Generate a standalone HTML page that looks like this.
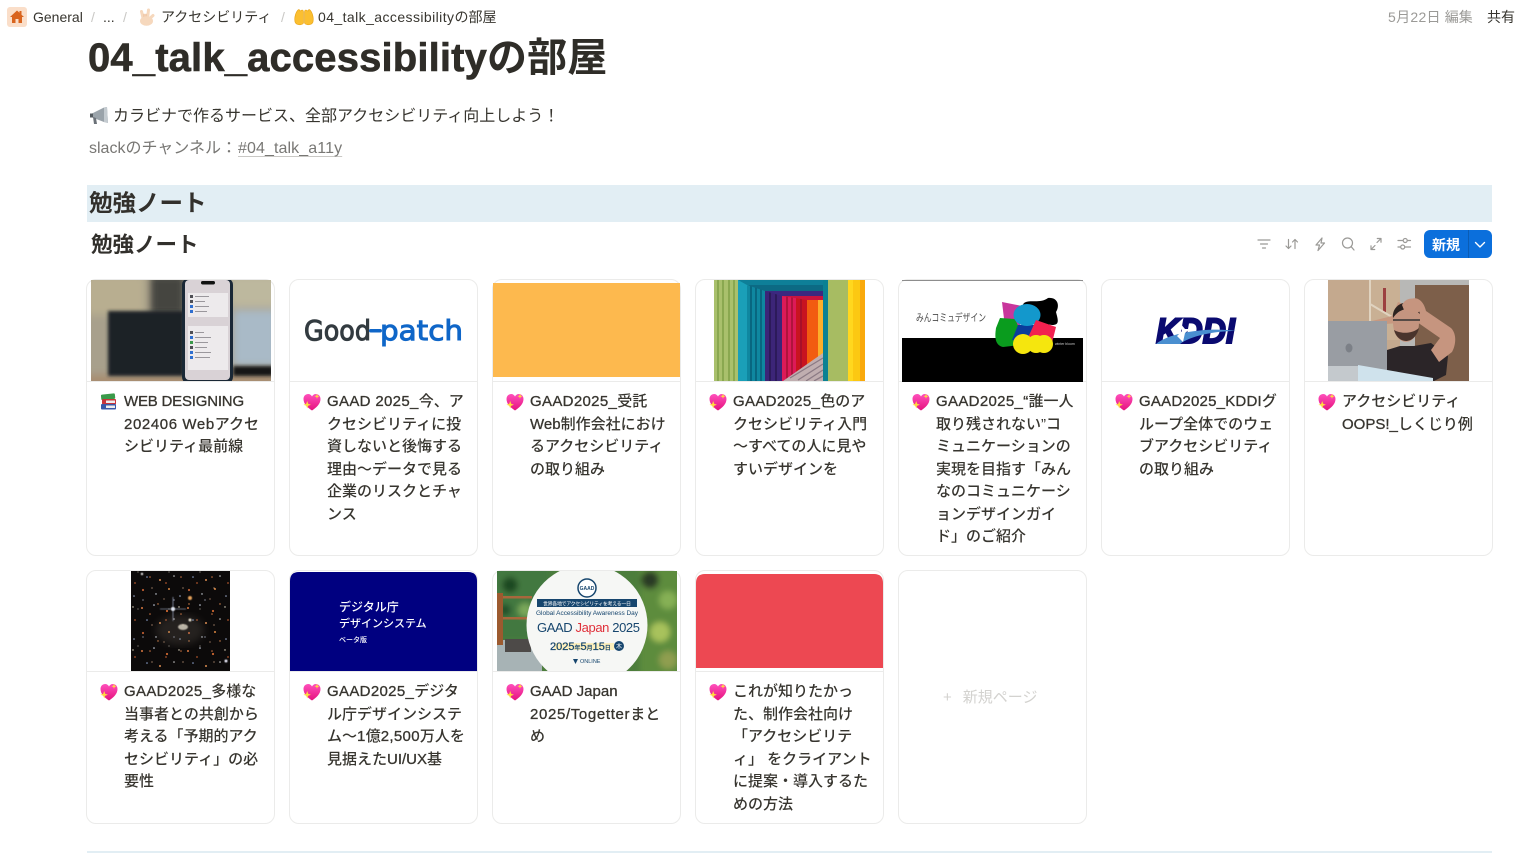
<!DOCTYPE html>
<html lang="ja"><head><meta charset="utf-8"><title>04_talk_accessibilityの部屋</title>
<style>
html,body{margin:0;padding:0;background:#fff}
body{position:relative;width:1519px;height:853px;overflow:hidden;font-family:"Liberation Sans","Noto Sans CJK JP",sans-serif;color:#37352f}
.t{position:absolute;white-space:nowrap}
.card{position:absolute;width:187px;border:1px solid #ebebea;border-radius:10px;box-sizing:content-box}
.r1{top:279px;height:275px}.r2{top:570px;height:252px}
.c{position:absolute;white-space:nowrap;font-size:15px;line-height:22.5px;font-weight:500;color:#37352f}
.l{-webkit-text-stroke:.3px #37352f;letter-spacing:.33px}
.bc{font-size:14px;line-height:20px;top:7px;color:#37352f}
.sep{color:#c9c8c5}
svg.g{position:absolute;left:0;top:0}
</style></head><body>

<div class="card r1" style="left:86px"></div>
<div class="card r1" style="left:289px"></div>
<div class="card r1" style="left:492px"></div>
<div class="card r1" style="left:695px"></div>
<div class="card r1" style="left:898px"></div>
<div class="card r1" style="left:1101px"></div>
<div class="card r1" style="left:1304px"></div>
<div class="card r2" style="left:86px"></div>
<div class="card r2" style="left:289px"></div>
<div class="card r2" style="left:492px"></div>
<div class="card r2" style="left:695px"></div>
<div class="card r2" style="left:898px"></div>

<svg class="g" width="1519" height="853" viewBox="0 0 1519 853" font-family="'Liberation Sans','Noto Sans CJK JP',sans-serif">
<defs>
<filter id="b1"><feGaussianBlur stdDeviation="1.5"/></filter>
<filter id="b3"><feGaussianBlur stdDeviation="3"/></filter>
<filter id="b4"><feGaussianBlur stdDeviation="4"/></filter>
<filter id="b05"><feGaussianBlur stdDeviation=".5"/></filter>
<linearGradient id="hg" x1="0" y1="0" x2="0" y2="1"><stop offset="0" stop-color="#ff4fbc"/><stop offset="1" stop-color="#e5127c"/></linearGradient>
<symbol id="heart" viewBox="0 0 18 18"><path d="M9 17.500C4.500 14.500 .5 11 .5 6 .5 2.800 2.800 1 5.200 1 6.900 1 8.300 2 9 3.500 9.700 2 11.100 1 12.800 1 15.200 1 17.500 2.800 17.500 6 17.500 11 13.500 14.500 9 17.500Z" fill="url(#hg)"/><path d="M4.200 8l1 2.700 2.700 1-2.700 1-1 2.700-1-2.700-2.700-1 2.700-1zM14 .8l.7 1.800 1.800.7-1.800.7-.7 1.800-.7-1.800-1.800-.7 1.800-.7z" fill="#ffd93f"/></symbol>
<pattern id="stars" width="46" height="43" patternUnits="userSpaceOnUse">
<circle cx="4" cy="6" r="1" fill="#d9773f"/><circle cx="16" cy="3" r=".8" fill="#cfd8e8"/><circle cx="29" cy="9" r="1.100" fill="#c9652f"/><circle cx="41" cy="5" r=".7" fill="#e9e0c8"/><circle cx="9" cy="18" r=".8" fill="#8fa4d0"/><circle cx="22" cy="21" r="1" fill="#d98a4f"/><circle cx="36" cy="17" r=".8" fill="#c8c8c8"/><circle cx="5" cy="31" r="1.100" fill="#b85a30"/><circle cx="18" cy="35" r=".7" fill="#dfe6f0"/><circle cx="31" cy="30" r="1" fill="#d9853f"/><circle cx="42" cy="37" r=".8" fill="#9aa8c8"/><circle cx="26" cy="40" r=".6" fill="#d0a080"/>
</pattern>
<pattern id="stars2" width="31" height="37" patternUnits="userSpaceOnUse">
<circle cx="3" cy="12" r=".7" fill="#e08a50"/><circle cx="11" cy="28" r=".9" fill="#a85028"/><circle cx="19" cy="8" r=".6" fill="#c0c8e0"/><circle cx="26" cy="22" r=".8" fill="#c87040"/><circle cx="14" cy="17" r=".5" fill="#e8e0d0"/><circle cx="28" cy="33" r=".6" fill="#e0b090"/>
</pattern>
<clipPath id="cp1"><path d="M91 280H271V381H91Z"/></clipPath>
<clipPath id="cp7"><path d="M1328 280H1469V381H1328Z"/></clipPath>
<clipPath id="cp9"><path d="M497 571H677V671H497Z"/></clipPath>
<clipPath id="cp4"><path d="M714 280H865V381H714Z"/></clipPath>
</defs>

<!-- breadcrumb icons -->
<rect x="7" y="7" width="20" height="20" rx="3" fill="#fadec9"/>
<path d="M17 10.500L10 17H12V23H15.500V19H18.500V23H22V17H24L21.500 14.700V11H19.500V12.800Z" fill="#d9641e"/>
<g fill="none" stroke="#f6d8bd" stroke-linecap="round"><path d="M141.500 11.500L143.500 20M148.500 10L147.500 19" stroke-width="3"/><path d="M147 21L153 15.500" stroke-width="3"/></g>
<path d="M144 14.500v5M146 14.500v5" stroke="#f0c8a8" stroke-width="1.800" stroke-linecap="round"/>
<ellipse cx="146.500" cy="21" rx="6.500" ry="4.800" fill="#f6d8bd"/>
<g transform="translate(294 9)"><path d="M1 13C0 8 2 3 4 1 5 0 6 1 6 2L8 1C9 1 9.500 2 9.500 3L9.500 14C8 16.500 2.500 16.500 1 13Z" fill="#fbbf30" stroke="#e8a317" stroke-width=".6"/><path d="M19 13C20 8 18 3 16 1 15 0 14 1 14 2L12 1C11 1 10.500 2 10.500 3L10.500 14C12 16.500 17.500 16.500 19 13Z" fill="#fbbf30" stroke="#e8a317" stroke-width=".6"/></g>

<!-- megaphone -->
<g transform="translate(90 106)"><path d="M1 8L14 1.500 17 1 18 17 14 16 1 11Z" fill="#9aa3aa"/><path d="M14 1.500L17 1 18 17 14 16Z" fill="#c4cbd0"/><path d="M3 11L6 12 7 18 4 18Z" fill="#6b7178"/><rect x="0" y="7.500" width="3" height="4" fill="#555b60"/></g>

<!-- band -->
<rect x="87" y="185" width="1405" height="37" fill="#e2eef4"/>

<!-- toolbar icons -->
<g fill="none" stroke="#9b9a97" stroke-width="1.200" stroke-linecap="round" stroke-linejoin="round">
<path d="M1258 240H1270M1260.500 244H1267.500M1262.500 248H1265.500"/>
<path d="M1288.500 239.500V248.500M1286 246L1288.500 248.500 1291 246M1295 248.500V239.500M1292.500 242L1295 239.500 1297.500 242"/>
<path d="M1322 238L1316 245H1319.500L1318 250.500M1322 238L1321 243H1324.500L1318 250.500"/>
<circle cx="1347.500" cy="243" r="5"/><path d="M1351.200 246.700L1354 250"/>
<path d="M1371 249.500L1375 245.500M1371 245.800V249.500H1374.700M1381 238.500L1377 242.500M1377.300 238.500H1381V242.200"/>
<path d="M1398 240.500H1403M1407.500 240.500H1410.500M1398 247H1400.500M1405 247H1410.500"/>
<circle cx="1405.200" cy="240.500" r="2"/><circle cx="1402.700" cy="247" r="2"/>
</g>
<rect x="1424" y="230" width="68" height="28" rx="6" fill="#0b6fdc"/>
<rect x="1468" y="230" width="1" height="28" fill="#0a5cb5"/>
<path d="M1475.500 242.500L1480 247 1484.500 242.500" fill="none" stroke="#fff" stroke-width="1.400" stroke-linecap="round" stroke-linejoin="round"/>

<!-- card dividers -->
<g fill="#ebebea">
<rect x="87" y="381" width="187" height="1"/><rect x="290" y="381" width="187" height="1"/><rect x="493" y="381" width="187" height="1"/><rect x="696" y="381" width="187" height="1"/><rect x="899" y="381" width="187" height="1"/><rect x="1102" y="381" width="187" height="1"/><rect x="1305" y="381" width="187" height="1"/>
<rect x="87" y="671" width="187" height="1"/><rect x="290" y="671" width="187" height="1"/><rect x="493" y="671" width="187" height="1"/><rect x="696" y="671" width="187" height="1"/>
</g>

<!-- card 1 photo -->
<g clip-path="url(#cp1)">
<rect x="91" y="280" width="180" height="101" fill="#a8a08c"/>
<g filter="url(#b4)">
<rect x="85" y="275" width="60" height="40" fill="#b8ae90"/>
<rect x="150" y="275" width="35" height="40" fill="#45443f"/>
<rect x="230" y="275" width="50" height="32" fill="#bdb89e"/>
<rect x="233" y="310" width="45" height="56" fill="#a9bac7"/>
<rect x="85" y="375" width="190" height="12" fill="#a88c70"/>
</g>
<g filter="url(#b1)">
<rect x="108" y="311" width="76" height="65" fill="#1f2227"/>
<rect x="233" y="366" width="40" height="10" fill="#121316"/>
</g>
<rect x="182" y="278" width="51" height="106" rx="7" fill="#1a2836"/>
<rect x="185" y="280" width="45" height="100" rx="4" fill="#d9d2d6"/>
<rect x="201" y="281" width="14" height="3.500" rx="1.700" fill="#111"/>
<g fill="#fff" opacity=".55"><rect x="188" y="293" width="40" height="24"/><rect x="188" y="326" width="40" height="44"/></g>
<g fill="#4f4f55"><rect x="190" y="295" width="3" height="3"/><rect x="190" y="300" width="3" height="3"/><rect x="190" y="331" width="3" height="3"/><rect x="190" y="346" width="3" height="3"/></g>
<rect x="190" y="341" width="3" height="3" fill="#3c9a4c"/>
<g fill="#2f6fd0"><rect x="190" y="305" width="3" height="3"/><rect x="190" y="310" width="3" height="3"/><rect x="190" y="336" width="3" height="3"/><rect x="190" y="351" width="3" height="3"/><rect x="190" y="356" width="3" height="3"/></g>
<g fill="#9a979c"><rect x="195" y="296" width="14" height="1"/><rect x="195" y="301" width="10" height="1"/><rect x="195" y="306" width="14" height="1"/><rect x="195" y="311" width="12" height="1"/><rect x="195" y="332" width="9" height="1"/><rect x="195" y="337" width="16" height="1"/><rect x="195" y="342" width="13" height="1"/><rect x="195" y="347" width="12" height="1"/><rect x="195" y="352" width="16" height="1"/><rect x="195" y="357" width="15" height="1"/></g>
</g>

<!-- card 2 logo -->
<text x="304" y="340" font-family="'DejaVu Sans',sans-serif" font-size="28" fill="#333b40" stroke="#333b40" stroke-width="1" textLength="67" lengthAdjust="spacingAndGlyphs">Good</text>
<text x="380" y="340" font-family="'DejaVu Sans',sans-serif" font-size="28" fill="#0f66c8" stroke="#0f66c8" stroke-width="1" textLength="83" lengthAdjust="spacingAndGlyphs">patch</text>
<rect x="369" y="329" width="13" height="3.500" rx="1.700" fill="#0f66c8"/>

<!-- card 3 -->
<rect x="493" y="283" width="187" height="94" fill="#fdb94e"/>

<!-- card 4 rainbow -->
<g clip-path="url(#cp4)">
<rect x="714" y="280" width="151" height="101" fill="#1296a8"/>
<rect x="714" y="280" width="24" height="101" fill="#a9c06c"/>
<path d="M718 280V381M723 280V381M729 280V381M734 280V381" stroke="#8aa850" stroke-width="2"/>
<rect x="738" y="280" width="9" height="101" fill="#1a9fb8"/>
<rect x="747" y="286" width="18" height="95" fill="#0f87a0"/>
<path d="M751 286V381M756 286V381M761 286V381" stroke="#075f78" stroke-width="1.600"/>
<rect x="765" y="291" width="17" height="90" fill="#3c2578"/>
<path d="M770 291V381M776 291V381" stroke="#261650" stroke-width="1.500"/>
<rect x="782" y="296" width="14" height="85" fill="#dd1a58"/>
<rect x="796" y="296" width="11" height="85" fill="#c81420"/>
<path d="M787 296V381M792 296V381M801 296V381" stroke="#98102e" stroke-width="1.300"/>
<rect x="807" y="300" width="11" height="81" fill="#f25c10"/>
<rect x="818" y="300" width="5" height="81" fill="#fcae2a"/>
<path d="M738 280H829L823 285H747Z" fill="#0e7f98"/>
<path d="M747 285H823V291H765Z" fill="#0c6a84"/>
<path d="M765 291H823V296H782Z" fill="#3b2880"/>
<path d="M782 296H823V300H807Z" fill="#c8143e"/>
<path d="M783 381L823 353V381Z" fill="#c0aeb0"/>
<path d="M790 378L823 358M798 380L823 364M806 381L823 370M814 381L823 376" stroke="#8b7a84" stroke-width="1.300"/>
<rect x="823" y="280" width="5" height="101" fill="#0a8193"/>
<rect x="828" y="280" width="20" height="101" fill="#a7bc62"/>
<rect x="848" y="280" width="5" height="101" fill="#ffd71e"/>
<rect x="853" y="280" width="7" height="101" fill="#fcc812"/>
<rect x="860" y="280" width="5" height="101" fill="#f9a90c"/>
</g>

<!-- card 5 -->
<rect x="902" y="280" width="181" height="1" fill="#8d8d8d"/>
<rect x="902" y="338" width="181" height="44" fill="#000"/>
<text x="916" y="321" font-size="10.500" fill="#4a4a4a" textLength="70" lengthAdjust="spacingAndGlyphs">みんコミュデザイン</text>
<path d="M1002 302L1022 306 1020 326 1005 327Z" fill="#c8369c"/>
<path d="M1024 303C1030 299 1040 304 1048 298 1058 297 1060 306 1056 312 1058 320 1060 325 1052 325L1030 322C1022 315 1020 308 1024 303Z" fill="#000"/>
<path d="M1000 318L1015 319 1020 330 1020 345 1003 347C994 345 995 335 996 328Z" fill="#0a9c1e"/>
<path d="M1018 325L1037 325 1030 344 1012 340Z" fill="#0a3d9c"/>
<ellipse cx="1027" cy="315" rx="13.500" ry="11" fill="#1398cc"/>
<path d="M1036 320L1056 327 1051 347 1026 342Z" fill="#f2214f"/>
<g fill="#f5e60e"><circle cx="1023" cy="344" r="10"/><circle cx="1036" cy="344" r="9"/><circle cx="1044" cy="344" r="9"/></g>
<text x="1055" y="345" font-size="3.500" fill="#ccc">winter bloom</text>

<!-- card 6 KDDI -->
<text x="1156" y="343" font-size="35" font-weight="700" font-style="italic" fill="#0a0a70" stroke="#0a0a70" stroke-width="2" textLength="79" lengthAdjust="spacingAndGlyphs">KDDI</text>
<path d="M1156 344C1170 332 1210 327 1236 331 1214 331 1190 336 1180 344Z" fill="#4a8fd0"/>
<path d="M1177 336L1182 331 1180 323 1185 329 1190 329 1185 333 1183 342Z" fill="#fff"/>

<!-- card 7 photo -->
<g clip-path="url(#cp7)">
<rect x="1328" y="280" width="141" height="101" fill="#c4a98e"/>
<rect x="1370" y="280" width="30" height="60" fill="#c9b094"/>
<rect x="1369" y="280" width="2" height="42" fill="#e0d3c0"/>
<rect x="1383" y="288" width="3" height="24" fill="#9c4040"/>
<path d="M1370 304L1392 317" stroke="#e0d3c0" stroke-width="2"/>
<rect x="1400" y="280" width="69" height="101" fill="#b8b8b6"/>
<rect x="1415" y="285" width="54" height="96" fill="#7d5f4a"/>
<path d="M1387 350L1400 346H1414L1431 343 1448 356 1446 375 1434 381H1387Z" fill="#2b2528"/>
<path d="M1372 321L1392 316 1398 302 1404 304 1398 323 1374 325Z" fill="#c79880"/>
<path d="M1411 299C1418 296 1424 302 1426 311L1451 328C1457 334 1456 345 1452 352L1439 362 1431 350 1440 338 1417 322Z" fill="#c6957f"/>
<ellipse cx="1406" cy="323" rx="13" ry="19" fill="#c49580"/>
<path d="M1393 318C1391 301 1416 296 1420 314 1412 307 1400 307 1393 318Z" fill="#2c2320"/>
<path d="M1394 330C1398 345 1415 345 1419 328 1412 334 1401 334 1394 330Z" fill="#4a342c"/>
<path d="M1393 320H1420" stroke="#333" stroke-width="1.400"/>
<path d="M1402 305C1406 297 1416 295 1424 308L1416 314 1404 310Z" fill="#c6957f"/>
<rect x="1328" y="321" width="59" height="50" fill="#999da3"/>
<ellipse cx="1349" cy="348" rx="3.500" ry="4.500" fill="#7c8087"/>
<path d="M1358 365L1433 378V381H1358Z" fill="#cfe2ec"/>
<path d="M1328 366H1358V381H1328Z" fill="#c4c9cd"/>
</g>

<!-- row 2 galaxy -->
<rect x="131" y="571" width="99" height="100" fill="#0c0a0a"/>
<rect x="131" y="571" width="99" height="100" fill="url(#stars)"/>
<rect x="131" y="571" width="99" height="100" fill="url(#stars2)"/>
<g filter="url(#b05)">
<circle cx="173" cy="609" r="2" fill="#fff"/><path d="M160 609H186M173 597V621" stroke="#b9c7e8" stroke-width=".6"/>
<ellipse cx="183" cy="627" rx="5" ry="3" fill="#f5eedc" opacity=".8"/><circle cx="190" cy="620" r="1.500" fill="#f5eedc"/>
<circle cx="190" cy="598" r="2" fill="#e2a05a"/><circle cx="226" cy="661" r="1.500" fill="#e8e8f8"/><circle cx="142" cy="574" r="1.200" fill="#dfdfdf"/>
</g>
<ellipse cx="180" cy="630" rx="24" ry="15" fill="#8a8074" opacity=".2" filter="url(#b4)"/>

<!-- row 2 blue -->
<path d="M290 671V581Q290 572 299 572H468Q477 572 477 581V671Z" fill="#000080"/>
<text x="339" y="611" font-size="12" font-weight="500" fill="#fff">デジタル庁</text>
<text x="339" y="627" font-size="11" font-weight="500" fill="#fff">デザインシステム</text>
<text x="339" y="642" font-size="7" font-weight="500" fill="#fff">ベータ版</text>

<!-- row 2 GAAD -->
<g clip-path="url(#cp9)">
<rect x="497" y="571" width="180" height="100" fill="#4c7d3c"/>
<g filter="url(#b3)">
<rect x="490" y="565" width="60" height="75" fill="#42783f"/>
<circle cx="510" cy="585" r="8" fill="#1f4a24"/><circle cx="525" cy="610" r="7" fill="#7aa85a"/><circle cx="505" cy="610" r="6" fill="#23502a"/>
<rect x="640" y="565" width="40" height="110" fill="#5d8c3d"/>
<circle cx="650" cy="580" r="9" fill="#2c3a26"/><circle cx="668" cy="600" r="9" fill="#86b054"/><circle cx="660" cy="632" r="10" fill="#a8c25c"/><circle cx="668" cy="660" r="9" fill="#8f9e50"/>
</g>
<rect x="497" y="640" width="45" height="31" fill="#a7b3b5"/>
<rect x="505" y="639" width="26" height="13" fill="#4d4a48"/>
<rect x="497" y="596" width="35" height="2.500" fill="#a8673c"/>
<rect x="497" y="617" width="32" height="2.500" fill="#a8673c"/>
<rect x="497" y="593" width="6" height="52" fill="#9c5a2f"/>
<circle cx="587" cy="625" r="60.500" fill="#f6f7f5"/>
</g>
<ellipse cx="587" cy="588" rx="9" ry="9" fill="#fff" stroke="#17466e" stroke-width="1.500"/>
<text x="587" y="590" font-size="5" font-weight="700" text-anchor="middle" fill="#17466e">GAAD</text>
<rect x="537" y="599" width="100" height="8" fill="#17466e"/>
<text x="587" y="605.500" font-size="5" text-anchor="middle" fill="#fff" textLength="88">世界各地でアクセシビリティを考える一日</text>
<text x="587" y="615" font-size="6.500" text-anchor="middle" fill="#17466e" textLength="102">Global Accessibility Awareness Day</text>
<text x="537" y="632" font-size="13" fill="#17466e" textLength="103">GAAD <tspan fill="#e0303a">Japan</tspan> 2025</text>
<rect x="554" y="643" width="60" height="7" fill="#fdf0bd"/>
<text x="550" y="650" font-size="11" fill="#17466e" stroke="#17466e" stroke-width=".25">2025<tspan font-size="6">年</tspan>5<tspan font-size="6">月</tspan>15<tspan font-size="6">日</tspan></text>
<circle cx="619" cy="646" r="5" fill="#17466e"/>
<text x="619" y="648.500" font-size="6" text-anchor="middle" fill="#fff">木</text>
<text x="580" y="663" font-size="5.500" fill="#17466e">ONLINE</text>
<path d="M573 659H578L575.500 664Z" fill="#17466e"/>

<!-- row 2 red -->
<path d="M696 668V583Q696 574 705 574H874Q883 574 883 583V668Z" fill="#ed4852"/>

<!-- card icons -->
<g transform="translate(101 393)"><rect x="0" y="1" width="14" height="5.500" rx="1" fill="#3a9a4a" transform="rotate(-6 7 3)"/><rect x="1" y="6" width="14" height="5.500" rx="1" fill="#c8343a"/><rect x="0" y="11" width="15" height="5.500" rx="1" fill="#3858a8"/><rect x="5" y="7.500" width="9" height="2.500" fill="#eee"/><rect x="5" y="12.500" width="9" height="2.500" fill="#eee"/></g>
<use href="#heart" x="303" y="393" width="18" height="18"/>
<use href="#heart" x="506" y="393" width="18" height="18"/>
<use href="#heart" x="709" y="393" width="18" height="18"/>
<use href="#heart" x="912" y="393" width="18" height="18"/>
<use href="#heart" x="1115" y="393" width="18" height="18"/>
<use href="#heart" x="1318" y="393" width="18" height="18"/>
<use href="#heart" x="100" y="683" width="18" height="18"/>
<use href="#heart" x="303" y="683" width="18" height="18"/>
<use href="#heart" x="506" y="683" width="18" height="18"/>
<use href="#heart" x="709" y="683" width="18" height="18"/>

<!-- bottom line -->
<rect x="87" y="851" width="1405" height="2" fill="#e2eef4"/>
</svg>

<!-- top text -->
<div class="t bc" style="left:33px">General</div>
<div class="t bc sep" style="left:91px">/</div>
<div class="t bc" style="left:103px">...</div>
<div class="t bc sep" style="left:123px">/</div>
<div class="t bc" style="left:161px">アクセシビリティ</div>
<div class="t bc sep" style="left:281px">/</div>
<div class="t bc" style="left:318px"><span style="letter-spacing:.42px">04_talk_accessibility</span>の部屋</div>
<div class="t bc" style="left:1388px;color:#9b9a97"><span style="letter-spacing:.3px">5月22日</span> 編集</div>
<div class="t bc" style="left:1487px">共有</div>

<div class="t" style="left:88px;top:34px;font-size:40px;line-height:48px;font-weight:700;color:#2f2d28;letter-spacing:.15px"><span style="-webkit-text-stroke:.6px #2f2d28">04_talk_accessibility</span>の部屋</div>
<div class="t" style="left:113px;top:105px;font-size:16px;line-height:24px">カラビナで作るサービス、全部アクセシビリティ向上しよう！</div>
<div class="t" style="left:89px;top:137px;font-size:16px;line-height:24px;color:#787774">slackのチャンネル：<span style="letter-spacing:.1px;margin-left:1px;text-decoration:underline;text-decoration-color:#c9c8c5;text-underline-offset:3px">#04_talk_a11y</span></div>

<div class="t" style="left:89px;top:186px;font-size:23.500px;line-height:34px;font-weight:700;color:#32302c">勉強ノート</div>
<div class="t" style="left:91px;top:229px;font-size:21.500px;line-height:32px;font-weight:700;color:#32302c">勉強ノート</div>
<div class="t" style="left:1432px;top:235px;font-size:14px;line-height:20px;font-weight:700;color:#fff">新規</div>

<!-- card text row 1 -->
<div class="c" style="left:124px;top:391px"><span class="l" style="letter-spacing:-.2px">WEB DESIGNING</span><br><span class="l" style="letter-spacing:.6px">202406 Web</span>アクセ<br>シビリティ最前線</div>
<div class="c" style="left:327px;top:391px"><span class="l">GAAD 2025_</span>今、ア<br>クセシビリティに投<br>資しないと後悔する<br>理由〜データで見る<br>企業のリスクとチャ<br>ンス</div>
<div class="c" style="left:530px;top:391px"><span class="l">GAAD2025_</span>受託<br><span class="l" style="letter-spacing:0">Web</span>制作会社におけ<br>るアクセシビリティ<br>の取り組み</div>
<div class="c" style="left:733px;top:391px"><span class="l">GAAD2025_</span>色のア<br>クセシビリティ入門<br>〜すべての人に見や<br>すいデザインを</div>
<div class="c" style="left:936px;top:391px"><span class="l">GAAD2025_“</span>誰一人<br>取り残されない”コ<br>ミュニケーションの<br>実現を目指す「みん<br>なのコミュニケーシ<br>ョンデザインガイ<br>ド」のご紹介</div>
<div class="c" style="left:1139px;top:391px"><span class="l" style="letter-spacing:.22px">GAAD2025_KDDI</span>グ<br>ループ全体でのウェ<br>ブアクセシビリティ<br>の取り組み</div>
<div class="c" style="left:1342px;top:391px">アクセシビリティ<br><span class="l" style="letter-spacing:0">OOPS!_</span>しくじり例</div>

<!-- card text row 2 -->
<div class="c" style="left:124px;top:681px"><span class="l">GAAD2025_</span>多様な<br>当事者との共創から<br>考える「予期的アク<br>セシビリティ」の必<br>要性</div>
<div class="c" style="left:327px;top:681px"><span class="l">GAAD2025_</span>デジタ<br>ル庁デザインシステ<br>ム〜<span class="l">1</span>億<span class="l">2,500</span>万人を<br>見据えた<span class="l" style="letter-spacing:0">UI/UX</span>基</div>
<div class="c" style="left:530px;top:681px"><span class="l" style="letter-spacing:0">GAAD Japan</span><br><span class="l" style="letter-spacing:.65px">2025/Togetter</span>まと<br>め</div>
<div class="c" style="left:733px;top:681px">これが知りたかっ<br>た、制作会社向け<br>「アクセシビリテ<br>ィ」 をクライアント<br>に提案・導入するた<br>めの方法</div>
<div class="t" style="left:943px;top:688px;font-size:15px;line-height:20px;color:#d3d2cf">+<span style="margin-left:11px">新規ページ</span></div>

</body></html>
